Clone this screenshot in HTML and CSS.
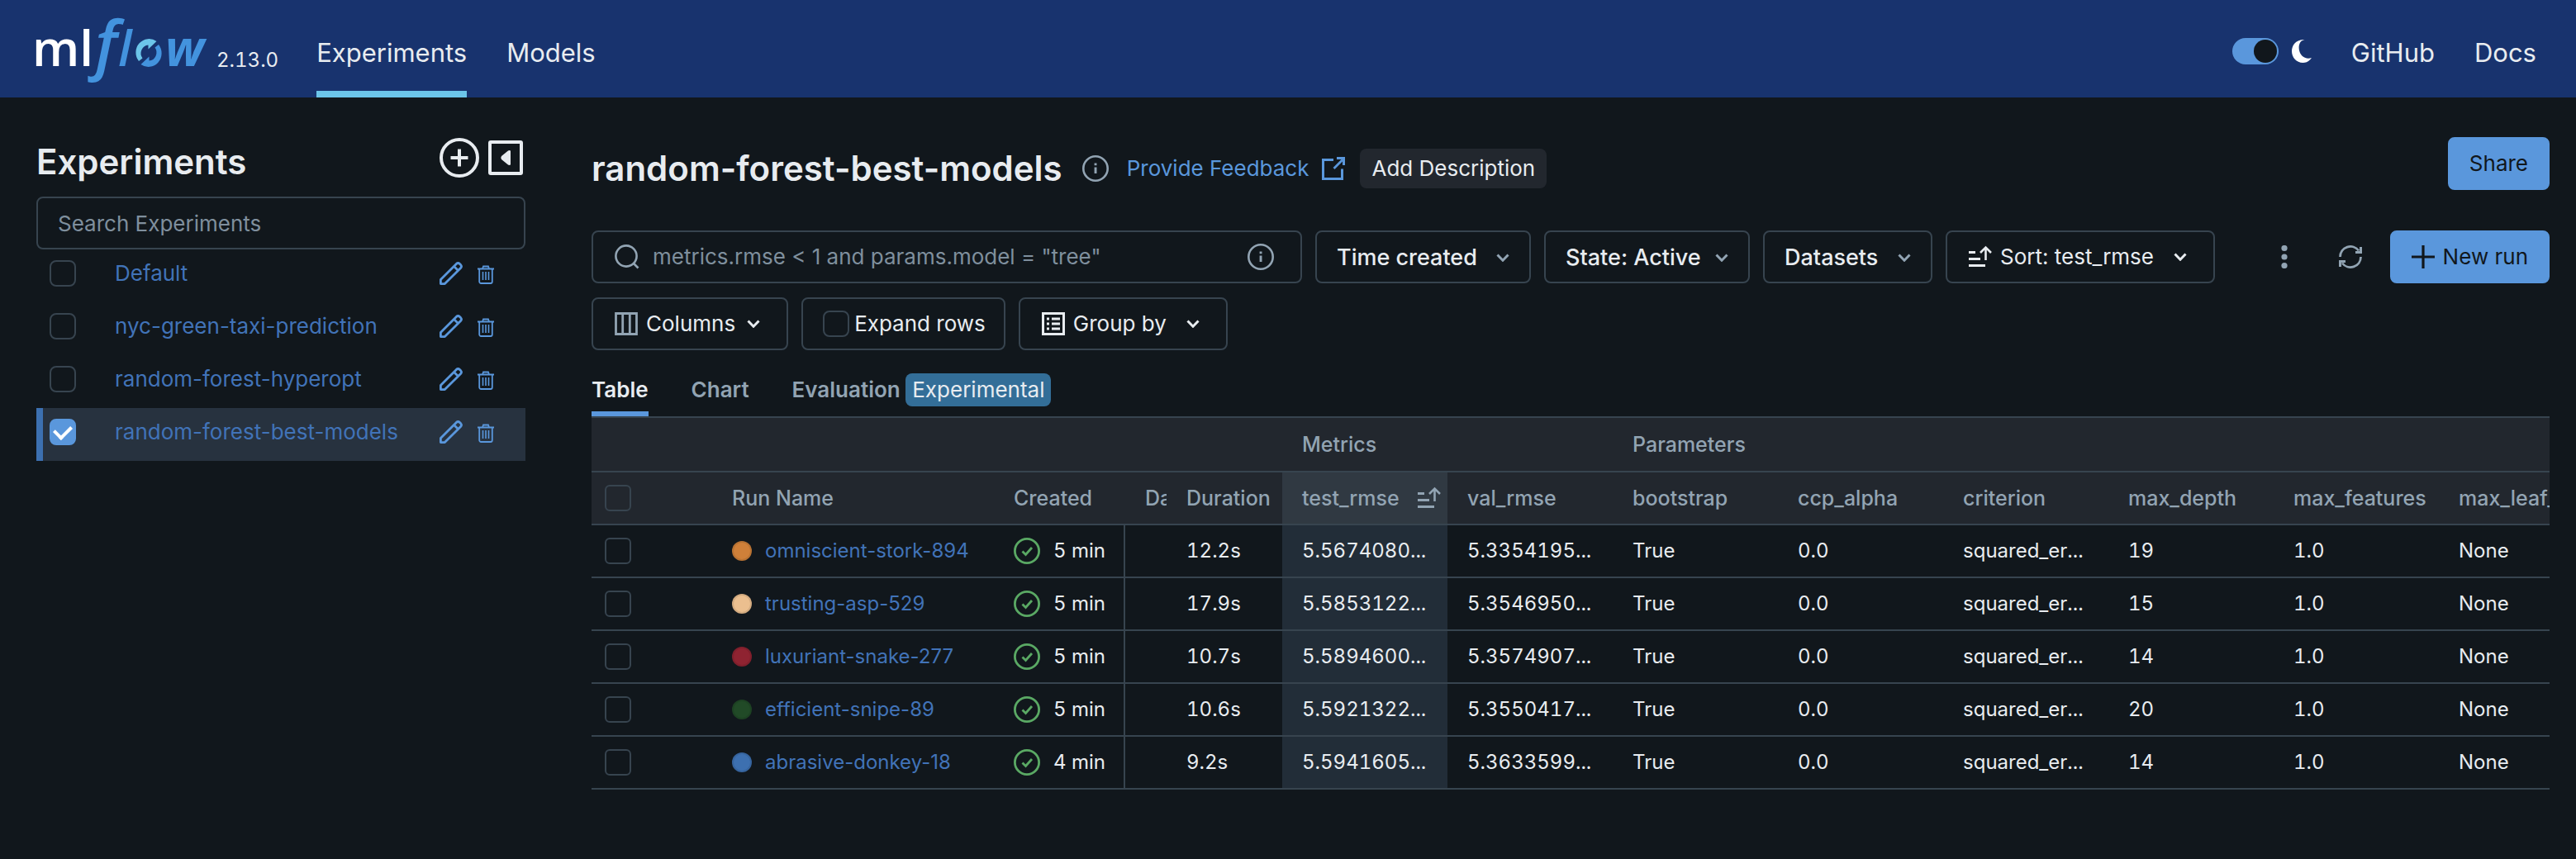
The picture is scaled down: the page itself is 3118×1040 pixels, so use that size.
FILE: index.html
```html
<!DOCTYPE html>
<html lang="en">
<head>
<meta charset="utf-8">
<title>random-forest-best-models - MLflow</title>
<meta name="viewport" content="width=device-width, initial-scale=1">
<link rel="stylesheet" href="styles.css">
</head>
<body>
<svg class="sprite" aria-hidden="true">
  <symbol id="i-chevron" viewBox="0 0 16 10"><path d="M1.500 1.500 8 8.200l6.500-6.700" fill="none" stroke="currentColor" stroke-width="3"/></symbol>
  <symbol id="i-info" viewBox="0 0 32 32"><circle cx="16" cy="16" r="14.700" fill="none" stroke="currentColor" stroke-width="2.600"/><path d="M14.600 14.500h2.900V22h-2.900zM14.600 9.500h2.900v2.800h-2.900z" fill="currentColor"/></symbol>
  <symbol id="i-sort" viewBox="0 0 28 28"><path d="M0 7h8v3H0zM0 15h14v3H0zM0 23h20v3H0z" fill="currentColor"/><path d="M20.500 18V2.500M14 9l6.500-6.500L27 9" fill="none" stroke="currentColor" stroke-width="2.600"/></symbol>
  <symbol id="i-pencil" viewBox="0 0 28 28"><path d="M1.400 26.600v-5L20.400 2.400a3 3 0 0 1 4 0l1.200 1.200a3 3 0 0 1 0 4L6.400 26.600zM17.500 5.500l5 5" fill="none" stroke="currentColor" stroke-width="2.800" stroke-linejoin="round"/></symbol>
  <symbol id="i-trash" viewBox="0 0 20 23"><path d="M0 4.500h20M6 4.500l1-3h6l1 3M2.200 4.500V20a2 2 0 0 0 2 2h11.600a2 2 0 0 0 2-2V4.500" fill="none" stroke="currentColor" stroke-width="1.800"/><path d="M6.500 8v10M10 8v10M13.500 8v10" stroke="currentColor" stroke-width="1.600"/></symbol>
  <symbol id="i-ok" viewBox="0 0 32 32"><circle cx="16" cy="16" r="14.600" fill="none" stroke="currentColor" stroke-width="2.800"/><path d="M10.500 16.500l4 4 7.500-8.500" fill="none" stroke="currentColor" stroke-width="2.800"/></symbol>
</svg>

<header class="topbar">
  <a class="brand" href="#" aria-label="MLflow home">
    <svg class="logo" viewBox="40 9 216 100" role="img" aria-label="mlflow">
      <text class="logo-ml" x="39" y="80">ml</text>
      <text class="logo-f" x="115" y="81">f</text>
      <text class="logo-flow" x="143" y="80">l</text>
      <path d="M168 74A16 16.500 0 0 1 189.500 50L179.500 59.500V54.500A9.500 10 0 0 0 172.500 70.500z" fill="#6cc5e9"/>
      <path d="M192 54A16 16.500 0 0 1 170.500 78L180.500 68.500V73.500A9.500 10 0 0 0 187.500 57.500z" fill="#4393de"/>
      <text class="logo-flow logo-w" x="200" y="80">w</text>
    </svg>
    <span class="version">2.13.0</span>
  </a>
  <nav class="nav">
    <a class="nav-link active" href="#">Experiments</a>
    <a class="nav-link" href="#">Models</a>
  </nav>
  <div class="nav-end">
    <label class="theme">
      <input class="switch" type="checkbox" role="switch" aria-label="Dark mode" checked>
      <svg class="moon" viewBox="0 0 24 28" aria-hidden="true"><path d="M15.500 0C5 1.500 7 21 18 22.500q3 .5 6-.5C21.500 26 17.500 28 13.500 28 5.500 28 0 21.500 0 14S5.500-.5 15.500 0z" fill="#fff"/></svg>
    </label>
    <a class="nav-link" href="#">GitHub</a>
    <a class="nav-link" href="#">Docs</a>
  </div>
</header>

<div class="layout">
  <aside class="sidebar">
    <div class="side-head">
      <h2 class="heading">Experiments</h2>
      <div class="side-tools">
        <button class="icon-btn" aria-label="New experiment"><svg width="48" height="48" viewBox="0 0 48 48"><circle cx="24" cy="24" r="22" fill="none" stroke="currentColor" stroke-width="4"/><path d="M24 13.500v21M13.500 24h21" stroke="currentColor" stroke-width="4"/></svg></button>
        <button class="icon-btn" aria-label="Collapse sidebar"><svg width="42" height="42" viewBox="0 0 42 42"><rect x="2" y="2" width="38" height="38" rx="1" fill="none" stroke="currentColor" stroke-width="4"/><path d="M27 12.500v17q-2 .8-3 0l-8-6.500q-1.500-2 0-4l8-6.500q1-.8 3 0z" fill="currentColor"/></svg></button>
      </div>
    </div>
    <input class="side-search" type="text" placeholder="Search Experiments" aria-label="Search Experiments">
    <ul class="exp-list">
      <li class="exp"><input class="check" type="checkbox" aria-label="Select Default"><a class="exp-link" href="#">Default</a><button class="icon-btn" aria-label="Rename"><svg width="28" height="28"><use href="#i-pencil"/></svg></button><button class="icon-btn trash" aria-label="Delete"><svg width="20" height="23"><use href="#i-trash"/></svg></button></li>
      <li class="exp"><input class="check" type="checkbox" aria-label="Select nyc-green-taxi-prediction"><a class="exp-link" href="#">nyc-green-taxi-prediction</a><button class="icon-btn" aria-label="Rename"><svg width="28" height="28"><use href="#i-pencil"/></svg></button><button class="icon-btn trash" aria-label="Delete"><svg width="20" height="23"><use href="#i-trash"/></svg></button></li>
      <li class="exp"><input class="check" type="checkbox" aria-label="Select random-forest-hyperopt"><a class="exp-link" href="#">random-forest-hyperopt</a><button class="icon-btn" aria-label="Rename"><svg width="28" height="28"><use href="#i-pencil"/></svg></button><button class="icon-btn trash" aria-label="Delete"><svg width="20" height="23"><use href="#i-trash"/></svg></button></li>
      <li class="exp selected"><input class="check" type="checkbox" aria-label="Select random-forest-best-models" checked><a class="exp-link" href="#">random-forest-best-models</a><button class="icon-btn" aria-label="Rename"><svg width="28" height="28"><use href="#i-pencil"/></svg></button><button class="icon-btn trash" aria-label="Delete"><svg width="20" height="23"><use href="#i-trash"/></svg></button></li>
    </ul>
  </aside>

  <main class="main">
    <div class="title-row">
      <div class="title-group">
        <h1 class="heading">random-forest-best-models</h1>
        <button class="icon-btn muted info" aria-label="Experiment info"><svg width="32" height="32"><use href="#i-info"/></svg></button>
        <a class="feedback" href="#">Provide Feedback
          <svg width="28" height="28" viewBox="0 0 28 28" aria-hidden="true"><path d="M14 3.500H1.500v23h23V14.500" fill="none" stroke="currentColor" stroke-width="3"/><path d="M14.500 14 25 3.500" stroke="currentColor" stroke-width="2.800"/><path d="M18 0h10v10h-3V3h-7z" fill="currentColor"/></svg>
        </a>
        <button class="add-desc">Add Description</button>
      </div>
      <button class="btn primary">Share</button>
    </div>

    <div class="toolbar">
      <div class="search-box">
        <svg class="muted" width="30" height="30" viewBox="0 0 30 30" aria-hidden="true"><circle cx="14" cy="14" r="12.600" fill="none" stroke="currentColor" stroke-width="2.600"/><path d="M22.500 22.500l6 6" stroke="currentColor" stroke-width="2.600"/></svg>
        <input class="search-input" type="text" placeholder="metrics.rmse &lt; 1 and params.model = &quot;tree&quot;" aria-label="Search runs">
        <button class="icon-btn muted" aria-label="Search syntax help"><svg width="32" height="32"><use href="#i-info"/></svg></button>
      </div>
      <div class="select wide"><select aria-label="Time created"><option>Time created</option></select><svg width="16" height="10"><use href="#i-chevron"/></svg></div>
      <div class="select"><select aria-label="State"><option>State: Active</option></select><svg width="16" height="10"><use href="#i-chevron"/></svg></div>
      <div class="select wide"><select aria-label="Datasets"><option>Datasets</option></select><svg width="16" height="10"><use href="#i-chevron"/></svg></div>
      <button class="btn menu" aria-haspopup="menu"><svg width="28" height="28"><use href="#i-sort"/></svg><span>Sort: test_rmse</span><svg class="chev far" width="16" height="10"><use href="#i-chevron"/></svg></button>
      <div class="toolbar-end">
        <button class="icon-btn muted" aria-label="More"><svg width="8" height="28" viewBox="0 0 8 28"><g fill="currentColor"><circle cx="4" cy="3.500" r="3.600"/><circle cx="4" cy="14" r="3.600"/><circle cx="4" cy="24.500" r="3.600"/></g></svg></button>
        <button class="icon-btn muted refresh" aria-label="Refresh"><svg width="28" height="28" viewBox="0 0 28 28"><path d="M1.500 14A12.500 12.500 0 0 1 24 6.500M26.500 14A12.500 12.500 0 0 1 4 21.500" fill="none" stroke="currentColor" stroke-width="2.800"/><path d="M28 2v8h-8V7h5V2zM0 26v-8h8v3H3v5z" fill="currentColor"/></svg></button>
        <button class="btn primary"><svg width="28" height="28" viewBox="0 0 28 28" aria-hidden="true"><path d="M14 0v28M0 14h28" stroke="currentColor" stroke-width="3.200"/></svg><span>New run</span></button>
      </div>
    </div>

    <div class="toolbar second">
      <button class="btn menu" aria-haspopup="menu"><svg class="muted" width="28" height="28" viewBox="0 0 28 28"><path d="M1.500 1.500h25v25h-25zM9.700 2v24M18.300 2v24" fill="none" stroke="currentColor" stroke-width="2.800"/></svg><span>Columns</span><svg class="chev near" width="16" height="10"><use href="#i-chevron"/></svg></button>
      <label class="btn expand"><input class="check" type="checkbox"><span>Expand rows</span></label>
      <button class="btn menu" aria-haspopup="menu"><svg width="28" height="28" viewBox="0 0 28 28"><path d="M1.500 1.500h25v25h-25z" fill="none" stroke="currentColor" stroke-width="3"/><path d="M6 6.500h3v3H6zM6 12.500h3v3H6zM6 18.500h3v3H6zM12 6.500h10v3H12zM12 12.500h10v3H12zM12 18.500h10v3H12z" fill="currentColor"/></svg><span>Group by</span><svg class="chev far" width="16" height="10"><use href="#i-chevron"/></svg></button>
    </div>

    <nav class="tabs">
      <a class="tab current" href="#">Table</a>
      <a class="tab" href="#">Chart</a>
      <a class="tab" href="#">Evaluation <span class="badge">Experimental</span></a>
    </nav>

    <div class="table-wrap">
      <table class="runs">
        <colgroup><col class="c-check"><col class="c-name"><col class="c-created"><col class="c-dataset"><col class="c-duration"><col class="c-value"><col class="c-value"><col class="c-value"><col class="c-value"><col class="c-value"><col class="c-value"><col class="c-value"><col></colgroup>
        <thead>
          <tr><th colspan="5"></th><th colspan="2">Metrics</th><th colspan="6">Parameters</th></tr>
          <tr><th class="sel"><input class="check" type="checkbox" aria-label="Select all runs"></th><th>Run Name</th><th>Created</th><th class="clip">Dataset</th><th>Duration</th><th class="sorted"><span class="sort-head">test_rmse<svg width="28" height="28"><use href="#i-sort"/></svg></span></th><th>val_rmse</th><th>bootstrap</th><th>ccp_alpha</th><th>criterion</th><th>max_depth</th><th>max_features</th><th class="clip">max_leaf_nodes</th></tr>
        </thead>
        <tbody>
          <tr><td class="sel"><input class="check" type="checkbox" aria-label="Select omniscient-stork-894"></td><td><span class="run"><i class="dot orange"></i><a href="#">omniscient-stork-894</a></span></td><td class="created"><span class="when"><svg width="32" height="32"><use href="#i-ok"/></svg>5 min</span></td><td></td><td>12.2s</td><td class="sorted">5.5674080...</td><td>5.3354195...</td><td>True</td><td>0.0</td><td>squared_er...</td><td>19</td><td>1.0</td><td>None</td></tr>
          <tr><td class="sel"><input class="check" type="checkbox" aria-label="Select trusting-asp-529"></td><td><span class="run"><i class="dot peach"></i><a href="#">trusting-asp-529</a></span></td><td class="created"><span class="when"><svg width="32" height="32"><use href="#i-ok"/></svg>5 min</span></td><td></td><td>17.9s</td><td class="sorted">5.5853122...</td><td>5.3546950...</td><td>True</td><td>0.0</td><td>squared_er...</td><td>15</td><td>1.0</td><td>None</td></tr>
          <tr><td class="sel"><input class="check" type="checkbox" aria-label="Select luxuriant-snake-277"></td><td><span class="run"><i class="dot red"></i><a href="#">luxuriant-snake-277</a></span></td><td class="created"><span class="when"><svg width="32" height="32"><use href="#i-ok"/></svg>5 min</span></td><td></td><td>10.7s</td><td class="sorted">5.5894600...</td><td>5.3574907...</td><td>True</td><td>0.0</td><td>squared_er...</td><td>14</td><td>1.0</td><td>None</td></tr>
          <tr><td class="sel"><input class="check" type="checkbox" aria-label="Select efficient-snipe-89"></td><td><span class="run"><i class="dot green"></i><a href="#">efficient-snipe-89</a></span></td><td class="created"><span class="when"><svg width="32" height="32"><use href="#i-ok"/></svg>5 min</span></td><td></td><td>10.6s</td><td class="sorted">5.5921322...</td><td>5.3550417...</td><td>True</td><td>0.0</td><td>squared_er...</td><td>20</td><td>1.0</td><td>None</td></tr>
          <tr><td class="sel"><input class="check" type="checkbox" aria-label="Select abrasive-donkey-18"></td><td><span class="run"><i class="dot blue"></i><a href="#">abrasive-donkey-18</a></span></td><td class="created"><span class="when"><svg width="32" height="32"><use href="#i-ok"/></svg>4 min</span></td><td></td><td>9.2s</td><td class="sorted">5.5941605...</td><td>5.3633599...</td><td>True</td><td>0.0</td><td>squared_er...</td><td>14</td><td>1.0</td><td>None</td></tr>
        </tbody>
      </table>
    </div>
  </main>
</div>
</body>
</html>
```
FILE: styles.css
```css
:root {
  --bg: #11171c;
  --text: #e8ecf0;
  --muted: #92a4b3;
  --placeholder: #7f8f9d;
  --border: #37444f;
  --accent: #5a97dc;
  --link: #4173b8;
  --head: #22272e;
}

* { box-sizing: border-box; }

body {
  margin: 0;
  min-height: 100vh;
  background: var(--bg);
  color: var(--text);
  font: 400 26px/40px Inter, "Liberation Sans", sans-serif;
}

a { color: inherit; text-decoration: none; }
svg { display: block; flex: none; }
button, input, select { font: inherit; color: inherit; }
.sprite { position: absolute; width: 0; height: 0; }
.muted { color: var(--muted); }

.icon-btn {
  display: block;
  padding: 0;
  border: 0;
  background: none;
  cursor: pointer;
}

/* top bar */
.topbar {
  display: flex;
  height: 118px;
  padding: 0 48px 0 40px;
  background: #18336e;
}
.brand { display: flex; align-items: center; margin-right: 46px; }
.logo { width: 216px; height: 100px; overflow: visible; }
.logo text { font-family: "Open Sans", "Noto Sans", sans-serif; font-size: 60px; font-weight: 600; }
.logo .logo-ml { fill: #fff; }
.logo .logo-flow { fill: #4393de; font-style: italic; }
.logo .logo-w { font-weight: 700; }
.logo .logo-f { fill: #4393de; font-style: italic; font-size: 78px; }
.version { padding: 28px 0 0 6px; font-size: 24px; line-height: 32px; font-variant-numeric: tabular-nums; }
.nav, .nav-end { display: flex; gap: 48px; }
.nav-end { margin-left: auto; }
.nav-link {
  display: flex;
  align-items: center;
  padding-top: 18px;
  border-bottom: 8px solid transparent;
  font-size: 31px;
}
.nav-link.active { border-color: #6cc5e9; }
.theme { display: flex; align-items: center; gap: 16px; padding-top: 6px; }
.switch {
  appearance: none;
  width: 56px;
  height: 32px;
  margin: 0;
  padding: 2px;
  border-radius: 16px;
  background: var(--accent);
}
.switch::after {
  content: "";
  display: block;
  width: 28px;
  height: 28px;
  margin-left: auto;
  border-radius: 50%;
  background: var(--bg);
}
.moon { width: 24px; height: 28px; }

/* page */
.layout {
  display: grid;
  grid-template-columns: 592px minmax(0, 1fr);
  gap: 80px;
  padding: 48px 32px 0 44px;
}
.heading { margin: 0; font-size: 42px; font-weight: 600; line-height: 52px; white-space: nowrap; }

/* experiment list */
.side-head { display: flex; justify-content: space-between; height: 72px; padding: 0 3px 0 0; }
.side-head .heading { padding-top: 4px; }
.side-tools { display: flex; align-items: center; gap: 11px; height: 50px; }
.side-search {
  display: block;
  width: 100%;
  height: 64px;
  padding: 0 24px;
  border: 2px solid var(--border);
  border-radius: 8px;
  background: none;
}
::placeholder { color: var(--placeholder); opacity: 1; }
.exp-list { margin: 0; padding: 0; list-style: none; }
.exp {
  display: flex;
  align-items: center;
  height: 64px;
  padding: 0 38px 6px 8px;
  border-left: 8px solid transparent;
  color: var(--accent);
}
.exp.selected { border-color: #3c70b0; background: #27323f; }
.exp-link { flex: 1; padding-left: 47px; color: var(--link); }
.trash { margin-left: 18px; padding-top: 2px; }

.check {
  appearance: none;
  display: grid;
  place-items: center;
  flex: none;
  width: 32px;
  height: 32px;
  margin: 0;
  border: 2px solid var(--border);
  border-radius: 8px;
}
.check:checked { border-color: var(--accent); background: var(--accent); }
.check:checked::after {
  content: "";
  width: 10px;
  height: 16px;
  margin-bottom: 4px;
  border: solid #fff;
  border-width: 0 4px 4px 0;
  transform: rotate(45deg);
}

/* title */
.title-row { display: flex; justify-content: space-between; margin-bottom: 49px; }
.title-group { display: flex; align-items: center; padding-top: 12px; }
.info { margin: 0 22px 0 24px; }
.feedback { display: flex; align-items: center; gap: 16px; margin-right: 18px; color: var(--accent); }
.add-desc {
  height: 48px;
  padding: 0 14px;
  border: 0;
  border-radius: 8px;
  background: var(--head);
}

/* controls */
.btn {
  display: flex;
  align-items: center;
  height: 64px;
  padding: 0 26px;
  border: 2px solid var(--border);
  border-radius: 8px;
  background: none;
  white-space: nowrap;
}
.btn.primary { gap: 10px; padding: 0 24px; border-color: var(--accent); background: var(--accent); color: var(--bg); }
.btn.menu { gap: 10px; padding-right: 32px; }
.chev.near { margin-left: 4px; }
.chev.far { margin-left: 14px; }
.btn.expand { gap: 6px; padding: 0 22px 0 24px; }

.toolbar { display: flex; gap: 16px; }
.toolbar.second { margin: 17px 0 28px; }
.toolbar-end { display: flex; align-items: center; margin-left: auto; }
.refresh { margin: 0 34px 0 62px; }
.search-box {
  display: flex;
  flex: 0 1 860px;
  align-items: center;
  height: 64px;
  padding: 0 32px 0 26px;
  border: 2px solid var(--border);
  border-radius: 8px;
}
.search-input { flex: 1; min-width: 0; height: 40px; padding: 0 0 0 16px; border: 0; background: none; }
.select { position: relative; }
.select select {
  appearance: none;
  height: 64px;
  padding: 2px 57px 0 24px;
  border: 2px solid var(--border);
  border-radius: 8px;
  background: none;
  font-size: 27px;
  font-weight: 500;
}
.select.wide select { padding-right: 63px; }
.select svg { position: absolute; top: 28px; right: 26px; color: var(--muted); pointer-events: none; }

/* tabs */
.tabs { display: flex; gap: 52px; }
.tab { padding-bottom: 6px; border-bottom: 6px solid transparent; color: var(--muted); font-weight: 600; }
.tab.current { border-color: var(--accent); color: var(--text); }
.badge {
  display: inline-block;
  padding: 0 8px;
  border-radius: 8px;
  background: #336e98;
  color: var(--text);
  font-weight: 400;
}

/* runs table */
.table-wrap { overflow: hidden; border-top: 2px solid var(--border); }
.runs {
  width: 100%;
  table-layout: fixed;
  border-collapse: separate;
  border-spacing: 0;
  font-size: 24px;
  line-height: 32px;
  font-variant-numeric: tabular-nums;
}
.c-check { width: 146px; }
.c-name { width: 341px; }
.c-created { width: 159px; }
.c-dataset { width: 50px; }
.c-duration { width: 140px; }
.c-value { width: 200px; }
.runs th, .runs td {
  height: 64px;
  padding: 0 0 0 24px;
  border-bottom: 2px solid var(--border);
  text-align: left;
  white-space: nowrap;
}
.runs th { background: var(--head); color: var(--muted); font-size: 25px; font-weight: 500; }
.runs thead tr:first-child th { height: 66px; }
.runs .clip { overflow: hidden; }
.runs .sel { padding-left: 16px; }
.runs .check { border-radius: 6px; }
.runs th.sorted { background: #303942; }
.runs td.sorted { background: #222d38; }
.sort-head { display: flex; align-items: center; justify-content: space-between; padding-right: 8px; }
.run, .when { display: flex; align-items: center; gap: 16px; }
.run a { color: var(--link); font-variant-numeric: normal; }
.when svg { color: #5aa964; }
.created { border-right: 2px solid var(--border); }
.dot { width: 24px; height: 24px; border: 2px solid rgba(0, 0, 0, .1); border-radius: 50%; }
.orange { background: #cf8039; }
.peach { background: #ebbf8f; }
.red { background: #8f2331; }
.green { background: #214a27; }
.blue { background: #3d70b0; }
```
